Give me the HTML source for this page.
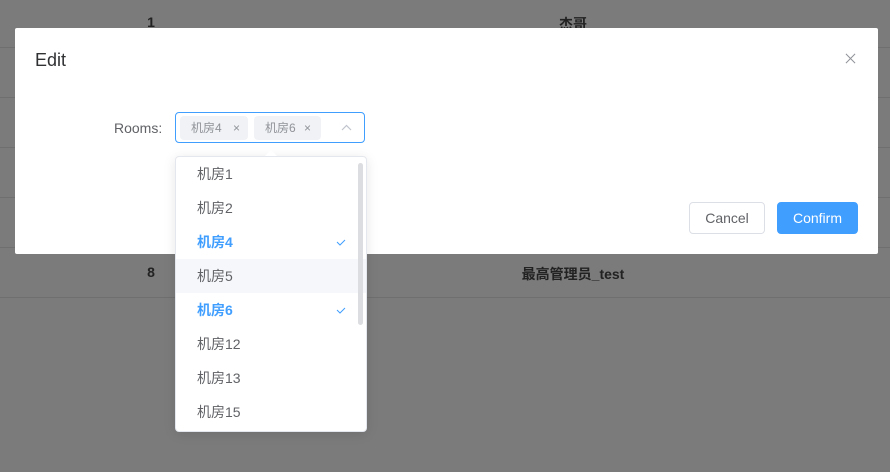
<!DOCTYPE html>
<html><head><meta charset="utf-8"><style>
*{margin:0;padding:0;box-sizing:border-box}
body{width:890px;height:472px;background:#7b7b7b;position:relative;overflow:hidden;font-family:"Liberation Sans","Noto Sans CJK SC",sans-serif}
.line{position:absolute;left:0;width:890px;height:1px;background:#6f6f6f}
.t{position:absolute;font-size:14px;font-weight:bold;color:#222;transform:translateX(-50%)}
.dlg{position:absolute;left:15px;top:28px;width:863px;height:226px;background:#fff;border-radius:2px}
.title{position:absolute;left:20px;top:22px;font-size:18px;color:#303133}
.close{position:absolute;left:830px;top:25px}
.lab{position:absolute;left:99px;top:92px;font-size:14px;color:#606266}
.sel{position:absolute;left:160px;top:84px;width:190px;height:31px;border:1px solid #409eff;border-radius:4px}
.tag{position:absolute;top:3px;height:24px;background:#f0f2f5;border-radius:4px;font-size:12px;color:#909399;line-height:24px;padding-left:11px}
.btn{position:absolute;top:174px;height:32px;border-radius:4px;font-size:14px;line-height:30px;text-align:center}
.dd{position:absolute;left:175px;top:156px;width:192px;height:276px;background:#fff;border:1px solid #e4e7ed;border-radius:4px;box-shadow:0 2px 12px rgba(0,0,0,.1)}
.arrow{position:absolute;left:265px;top:150px;width:0;height:0;border-left:6px solid transparent;border-right:6px solid transparent;border-bottom:6px solid #fff}
.it{position:absolute;left:0;width:190px;height:34px;line-height:34px;padding-left:21px;font-size:14px;color:#606266}
.sl{color:#409eff;font-weight:bold}
.hv{background:#f5f7fa}
.ck{position:absolute;left:159px;top:0}
.sb{position:absolute;left:182px;top:6px;width:5px;height:162px;background:#dcdde0;border-radius:3px}
</style></head><body>
<div class="line" style="top:47px"></div>
<div class="line" style="top:97px"></div>
<div class="line" style="top:147px"></div>
<div class="line" style="top:197px"></div>
<div class="line" style="top:247px"></div>
<div class="line" style="top:297px"></div>
<div class="t" style="left:151px;top:14px">1</div>
<div class="t" style="left:573px;top:14px">杰哥</div>
<div class="t" style="left:151px;top:264px">8</div>
<div class="t" style="left:573px;top:264px">最高管理员_test</div>
<div class="dlg">
<div class="title">Edit</div>
<svg class="close" width="11" height="11" viewBox="0 0 12 12"><path d="M1 1L11 11M11 1L1 11" stroke="#909399" stroke-width="1.1"/></svg>
<div class="lab">Rooms:</div>
<div class="sel">
<div class="tag" style="left:4px;width:68px">机房4 <span style="position:absolute;left:53px">×</span></div>
<div class="tag" style="left:78px;width:67px">机房6 <span style="position:absolute;left:50px">×</span></div>
<svg style="position:absolute;left:165px;top:11px" width="11" height="7" viewBox="0 0 11 7"><path d="M1 6L5.5 1.5L10 6" stroke="#c0c4cc" stroke-width="1.2" fill="none"/></svg>
</div>
<div class="btn" style="left:674px;width:76px;border:1px solid #dcdfe6;color:#606266">Cancel</div>
<div class="btn" style="left:762px;width:81px;background:#409eff;border:1px solid #409eff;color:#fff">Confirm</div>
</div>
<div class="dd">
<div class="it" style="top:0">机房1</div>
<div class="it" style="top:34px">机房2</div>
<div class="it sl" style="top:68px">机房4<svg class="ck" width="12" height="34" viewBox="0 0 12 34"><path d="M2 17L5 20L10 15" stroke="#409eff" stroke-width="1" fill="none"/></svg></div>
<div class="it hv" style="top:102px">机房5</div>
<div class="it sl" style="top:136px">机房6<svg class="ck" width="12" height="34" viewBox="0 0 12 34"><path d="M2 17L5 20L10 15" stroke="#409eff" stroke-width="1" fill="none"/></svg></div>
<div class="it" style="top:170px">机房12</div>
<div class="it" style="top:204px">机房13</div>
<div class="it" style="top:238px">机房15</div>
<div class="sb"></div>
</div>
<div class="arrow"></div>
</body></html>
